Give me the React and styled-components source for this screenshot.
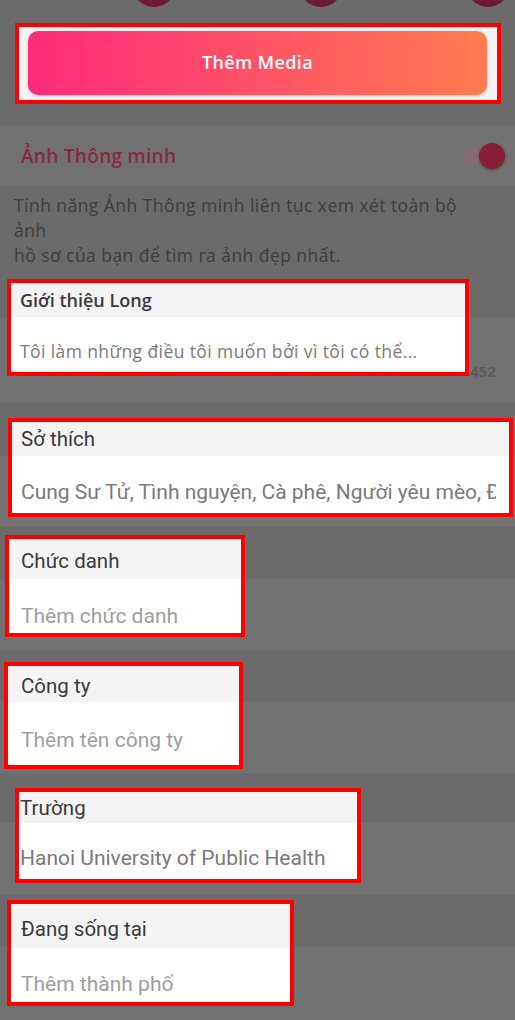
import React from "react";
import styled, { createGlobalStyle } from "styled-components";

const GlobalStyle = createGlobalStyle`
  html, body {
    margin: 0;
    padding: 0;
    background: #717171;
  }
  #root {
    width: 515px;
    overflow: hidden;
  }
`;

// dimmed page colours
const DIM_BAND = "#6b6b6b";
const DIM_ROW = "#717171";
const SANS = '"Open Sans", "Noto Sans", sans-serif';
const ANDROID = '"Roboto", "Noto Sans", sans-serif';

const Page = styled.div`
  display: flex;
  flex-direction: column;
  width: 515px;
  font-family: ${SANS};
`;

const PhotoStrip = styled.div`
  height: 7px;
  overflow: hidden;
  background: ${DIM_BAND};
  display: flex;
  align-items: flex-end;
  padding-left: 132px;
  gap: 123px;
`;

const AddDot = styled.span`
  flex: 0 0 44px;
  height: 44px;
  border-radius: 50%;
  background: #6c1b32;
`;

const MediaSection = styled.div`
  background: ${DIM_BAND};
  padding: 16px 14px 22px 15px;
`;

const Card = styled.div`
  border: 4px solid #ff0000;
  width: ${(p) => p.$width}px;
  margin-left: ${(p) => p.$left || 0}px;
  box-sizing: border-box;
  flex-shrink: 0;
`;

const MediaInner = styled.div`
  background: #f3f3f3;
  padding: 4px 10px 5px 9px;
`;

const MediaButton = styled.button`
  width: 100%;
  height: 64px;
  border: none;
  border-radius: 10px;
  background: linear-gradient(90deg, #ff2b7b 0%, #ff5266 50%, #ff7c4f 100%);
  box-shadow: 0 1px 3px rgba(0, 0, 0, 0.18);
  color: #fff;
  font-family: ${SANS};
  font-weight: 600;
  font-size: 18px;
  letter-spacing: 0.35px;
  padding: 0 0 2px;
`;

const SmartRow = styled.div`
  background: ${DIM_ROW};
  height: 59px;
  display: flex;
  align-items: center;
  justify-content: space-between;
  padding: 0 10px 0 21px;
`;

const SmartTitle = styled.span`
  color: #862a3e;
  font-weight: 600;
  font-size: 19px;
  letter-spacing: 0.3px;
`;

const Toggle = styled.span`
  position: relative;
  width: 42px;
  height: 26px;
  display: inline-flex;
  align-items: center;

  &::before {
    content: "";
    width: 36px;
    height: 16px;
    border-radius: 8px;
    background: #876a71;
  }

  &::after {
    content: "";
    position: absolute;
    right: 0;
    top: 0;
    width: 26px;
    height: 26px;
    border-radius: 50%;
    background: #861e35;
    box-shadow: 0 1px 3px rgba(0, 0, 0, 0.35);
  }
`;

const SmartNote = styled.p`
  margin: 0;
  background: ${DIM_BAND};
  padding: 8px 14px 0;
  color: #3d3d3d;
  font-size: 17.5px;
  letter-spacing: 0.45px;
  line-height: 25px;
`;

const Section = styled.section`
  display: flex;
  align-items: flex-end;
  padding-top: ${(p) => p.$top}px;
  padding-bottom: ${(p) => p.$bottom}px;
  background: linear-gradient(
    to bottom,
    ${DIM_BAND} 0,
    ${DIM_BAND} ${(p) => p.$band}px,
    ${DIM_ROW} ${(p) => p.$band}px
  );
`;

const CardHead = styled.div`
  background: #f4f4f4;
  height: ${(p) => p.$h}px;
  display: flex;
  align-items: center;
  padding-left: ${(p) => p.$pad}px;
  color: #3a3a3a;
  font-family: ${(p) => (p.$android ? ANDROID : SANS)};
  font-weight: ${(p) => (p.$android ? 400 : 600)};
  font-size: ${(p) => (p.$android ? "20.5px" : "18px")};
  padding-top: ${(p) => p.$shift || 0}px;
  box-sizing: border-box;
`;

const CardBody = styled.div`
  background: #fff;
  height: ${(p) => p.$h}px;
  box-sizing: border-box;
  display: flex;
  align-items: flex-end;
  padding: 0 13px ${(p) => p.$under}px ${(p) => p.$pad}px;
`;

const Value = styled.span`
  display: block;
  white-space: nowrap;
  overflow: hidden;
  line-height: 24px;
  color: ${(p) => (p.$empty ? "#9e9e9e" : "#7a7a7a")};
  font-family: ${(p) => (p.$android ? ANDROID : SANS)};
  font-size: ${(p) => (p.$android ? "21px" : "17.5px")};
  letter-spacing: ${(p) => (p.$android ? 0 : 0.4)}px;
`;

const Counter = styled.span`
  margin: 0 0 -5px 1px;
  color: #5b5b5b;
  font-weight: 700;
  font-size: 15px;
`;

const fields = [
  {
    key: "hobby",
    title: "Sở thích",
    value: "Cung Sư Tử, Tình nguyện, Cà phê, Người yêu mèo, Đi phượt",
    top: 15, bottom: 10, band: 53, left: 8, width: 505,
    head: 34, body: 57, pad: 9, under: 9,
  },
  {
    key: "job",
    title: "Chức danh",
    value: "Thêm chức danh",
    empty: true,
    top: 8, bottom: 13, band: 52, left: 5, width: 240,
    head: 40, body: 54, pad: 12, under: 5, shift: 4,
  },
  {
    key: "company",
    title: "Công ty",
    value: "Thêm tên công ty",
    empty: true,
    top: 12, bottom: 4, band: 52, left: 4, width: 239,
    head: 36, body: 63, pad: 13, under: 13, shift: 3,
  },
  {
    key: "school",
    title: "Trường",
    value: "Hanoi University of Public Health",
    top: 15, bottom: 12, band: 50, left: 15, width: 346,
    head: 31, body: 56, pad: 1, under: 9, shift: -4,
  },
  {
    key: "city",
    title: "Đang sống tại",
    value: "Thêm thành phố",
    empty: true,
    top: 5, bottom: 18, band: 52, left: 7, width: 287,
    head: 44, body: 54, pad: 10, under: 6, shift: 6,
  },
];

export default function App() {
  return (
    <>
      <GlobalStyle />
      <Page>
        <PhotoStrip>
          <AddDot />
          <AddDot />
          <AddDot />
        </PhotoStrip>

        <MediaSection>
          <Card $width={486}>
            <MediaInner>
              <MediaButton type="button">Thêm Media</MediaButton>
            </MediaInner>
          </Card>
        </MediaSection>

        <SmartRow>
          <SmartTitle>Ảnh Thông minh</SmartTitle>
          <Toggle />
        </SmartRow>
        <SmartNote>
          Tính năng Ảnh Thông minh liên tục xem xét toàn bộ
          <br />
          ảnh
          <br />
          hồ sơ của bạn để tìm ra ảnh đẹp nhất.
        </SmartNote>

        <Section $top={11} $bottom={27} $band={49}>
          <Card $left={7} $width={462}>
            <CardHead $h={34} $pad={9}>Giới thiệu Long</CardHead>
            <CardBody $h={55} $pad={9} $under={9}>
              <Value>Tôi làm những điều tôi muốn bởi vì tôi có thể...</Value>
            </CardBody>
          </Card>
          <Counter>452</Counter>
        </Section>

        {fields.map((f) => (
          <Section key={f.key} $top={f.top} $bottom={f.bottom} $band={f.band}>
            <Card $left={f.left} $width={f.width}>
              <CardHead $android $h={f.head} $pad={f.pad} $shift={f.shift}>
                {f.title}
              </CardHead>
              <CardBody $h={f.body} $pad={f.pad} $under={f.under}>
                <Value $android $empty={f.empty}>
                  {f.value}
                </Value>
              </CardBody>
            </Card>
          </Section>
        ))}
      </Page>
    </>
  );
}
